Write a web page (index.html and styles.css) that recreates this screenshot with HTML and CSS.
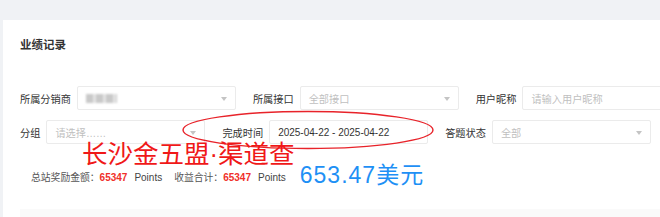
FILE: index.html
```html
<!DOCTYPE html>
<html lang="zh">
<head>
<meta charset="utf-8">
<link rel="stylesheet" href="styles.css">
</head>
<body>
<div class="card">
  <div class="title">业绩记录</div>
  <div class="filters">
    <div class="row">
      <div class="field">
        <span class="label">所属分销商</span>
        <div class="box select"><span class="blurred"></span><i class="caret"></i></div>
      </div>
      <div class="field">
        <span class="label">所属接口</span>
        <div class="box select"><span class="ph">全部接口</span><i class="caret"></i></div>
      </div>
      <div class="field">
        <span class="label">用户昵称</span>
        <div class="box input"><span class="ph">请输入用户昵称</span></div>
      </div>
    </div>
    <div class="row">
      <div class="field">
        <span class="label">分组</span>
        <div class="box select"><span class="ph">请选择……</span><i class="caret"></i></div>
      </div>
      <div class="field">
        <span class="label">完成时间</span>
        <div class="box"><span class="val">2025-04-22 - 2025-04-22</span></div>
      </div>
      <div class="field">
        <span class="label">答题状态</span>
        <div class="box select"><span class="ph">全部</span><i class="caret"></i></div>
      </div>
    </div>
  </div>
  <div class="stats"><span class="stat">总站奖励金额：<b>65347</b><span class="unit">Points</span></span><span class="stat">收益合计：<b>65347</b><span class="unit">Points</span></span><span class="usd">653.47美元</span></div>
  <div class="table-head"></div>
  <svg class="ring" width="256" height="42" viewBox="0 0 256 42"><ellipse cx="128" cy="21" rx="125" ry="18.5" fill="none" stroke="#e8232a" stroke-width="1.4"/></svg>
  <div class="stamp">长沙金五盟<span class="dot">·</span>渠道查</div>
</div>
</body>
</html>
```
FILE: styles.css
```css
* { box-sizing: border-box; }
html, body { margin: 0; padding: 0; }
body {
  background: #f0f2f5;
  font-family: "Liberation Sans", "Noto Sans CJK SC", sans-serif;
  color: #333;
  width: 660px;
  height: 217px;
  overflow: hidden;
}
.card {
  position: relative;
  margin: 20px 0 0 3px;
  background: #fff;
  padding: 15px 0 0 17px;
  height: 197px;
  overflow: hidden;
}
.title {
  font-size: 11.5px;
  font-weight: bold;
  line-height: 20px;
  color: #333;
}
.filters {
  margin-top: 31px;
  display: flex;
  flex-direction: column;
  gap: 10px;
}
.row {
  display: flex;
  gap: 17px;
  white-space: nowrap;
}
.field {
  display: flex;
  align-items: center;
  gap: 6px;
}
.label {
  font-size: 10.2px;
  color: #333;
}
.box {
  position: relative;
  width: 159px;
  height: 24px;
  border: 1px solid #ebebeb;
  border-radius: 2px;
  display: flex;
  align-items: center;
  padding-left: 8px;
  font-size: 10.2px;
}
.box.input { width: 160px; }
.ph { color: #bfbfbf; }
.val { color: #333; font-size: 10px; }
.caret {
  position: absolute;
  right: 8px;
  top: 10px;
  width: 0;
  height: 0;
  border-left: 3.5px solid transparent;
  border-right: 3.5px solid transparent;
  border-top: 4px solid #c4c4c4;
}
.blurred {
  display: block;
  width: 31px;
  height: 9px;
  background: repeating-linear-gradient(90deg, #c9c9c9 0 7px, #e4e4e4 7px 10px);
  filter: blur(0.8px);
}
.stats {
  margin-top: 19px;
  padding-left: 11px;
  height: 30px;
  white-space: nowrap;
  font-size: 9.8px;
  color: #555;
  line-height: 30px;
}
.stat { margin-right: 12px; }
.stat b { color: #f0302a; font-weight: bold; font-size: 10px; }
.unit { margin-left: 7px; font-size: 10px; color: #444; }
.usd {
  margin-left: 2px;
  font-size: 23px;
  letter-spacing: 1px;
  line-height: 20px;
  vertical-align: -2px;
  color: #1e90f5;
}
.table-head {
  margin-top: 16px;
  height: 20px;
  background: #fafafa;
}
.ring {
  position: absolute;
  left: 177px;
  top: 89px;
}
.stamp {
  position: absolute;
  left: 79px;
  top: 118px;
  font-size: 25.5px;
  line-height: 28px;
  color: #f01818;
  font-family: "Noto Sans CJK SC", sans-serif;
  white-space: nowrap;
}
.dot {
  font-family: "Liberation Sans", sans-serif;
}
```
